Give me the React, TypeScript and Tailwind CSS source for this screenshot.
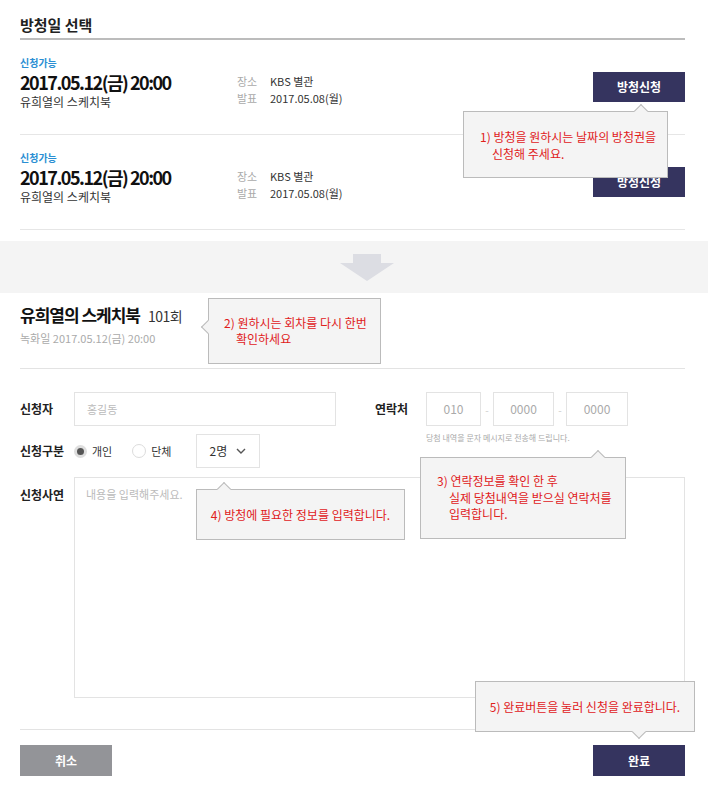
import React from 'react';

const schedules = [
  { status: '신청가능', date: '2017.05.12(금) 20:00', title: '유희열의 스케치북', place: 'KBS 별관', notice: '2017.05.08(월)' },
  { status: '신청가능', date: '2017.05.12(금) 20:00', title: '유희열의 스케치북', place: 'KBS 별관', notice: '2017.05.08(월)' },
];

function ArrowUp({ left }: { left: number }) {
  return (
    <div
      className="absolute top-[-6px] w-[10px] h-[10px] bg-[#f4f4f4] border-l border-t border-[#bbbbbb] rotate-45"
      style={{ left }}
    />
  );
}

export default function App() {
  return (
    <div className="relative w-[708px] min-h-[810px] bg-white text-[#222] font-['Noto_Sans_CJK_KR','Noto_Sans',sans-serif]">
      {/* 방청일 선택 */}
      <div className="ml-[20px] w-[665px]">
        <div className="pt-[15px] pb-[3px] border-b-2 border-[#bcbcbc]">
          <h2 className="text-[15px] leading-[20px] font-bold">방청일 선택</h2>
        </div>

        {schedules.map((item, i) => (
          <div key={i} className="flex items-start h-[95px] border-b border-[#e6e6e6]">
            <div className="w-[217px] pt-[16px]">
              <p className="text-[10px] leading-[14px] font-bold text-[#2b8fd3]">{item.status}</p>
              <p className="text-[18px] leading-[22px] my-[1px] font-bold tracking-[-1.5px] text-[#111]">{item.date}</p>
              <p className="text-[12px] leading-[16px] text-[#333]">{item.title}</p>
            </div>
            <div className="flex-1 pt-[33px] text-[11px] leading-[17px]">
              <div className="flex"><span className="w-[33px] text-[#aaa]">장소</span><span className="text-[#333]">{item.place}</span></div>
              <div className="flex"><span className="w-[33px] text-[#aaa]">발표</span><span className="text-[#333]">{item.notice}</span></div>
            </div>
            <button className="mt-[32px] w-[92px] h-[30px] bg-[#35345f] text-white text-[12px] font-bold">방청신청</button>
          </div>
        ))}
      </div>

      {/* 화살표 */}
      <div className="mt-[11px] h-[52px] bg-[#f4f4f4] flex justify-center pt-[13px]">
        <svg width="54" height="27" viewBox="0 0 54 27" className="ml-[26px]">
          <path d="M13 0 H41 V9 H54 L27 27 L0 9 H13 Z" fill="#dcdde3" />
        </svg>
      </div>

      {/* 회차 정보 */}
      <div className="ml-[20px] w-[665px]">
        <div className="pt-[10px] pb-[22px] border-b border-[#e3e3e3]">
          <p className="leading-[24px]">
            <span className="text-[17px] font-bold text-[#111] tracking-[-1px]">유희열의 스케치북</span>
            <span className="ml-[8px] text-[14px] text-[#333] tracking-[-0.5px]">101회</span>
          </p>
          <p className="mt-[2px] text-[11px] leading-[16px] text-[#aaa]">녹화일 2017.05.12(금) 20:00</p>
        </div>

        {/* 신청 폼 */}
        <div className="pt-[23px] flex">
          <div className="w-[355px]">
            <div className="flex items-center h-[34px]">
              <span className="w-[54px] text-[12px] font-bold">신청자</span>
              <div className="w-[262px] h-[34px] border border-[#e3e3e3] flex items-center pl-[12px] text-[11px] text-[#bbb]">홍길동</div>
            </div>
            <div className="mt-[8px] flex items-center h-[34px]">
              <span className="w-[54px] text-[12px] font-bold">신청구분</span>
              <span className="w-[13px] h-[13px] rounded-full border-[3px] border-[#dedede] bg-[#555]" />
              <span className="ml-[5px] text-[11px] text-[#333]">개인</span>
              <span className="ml-[20px] w-[14px] h-[14px] rounded-full border border-[#dcdcdc]" />
              <span className="ml-[5px] text-[11px] text-[#333]">단체</span>
              <div className="ml-[24px] w-[64px] h-[34px] border border-[#e3e3e3] flex items-center justify-between pl-[13px] pr-[13px]">
                <span className="text-[12px] text-[#333]">2명</span>
                <svg width="10" height="7" viewBox="0 0 10 7"><path d="M1 1 L5 5 L9 1" fill="none" stroke="#555" strokeWidth="1.4" /></svg>
              </div>
            </div>
          </div>
          <div>
            <div className="flex items-center h-[34px]">
              <span className="w-[51px] text-[12px] font-bold">연락처</span>
              <div className="w-[55px] h-[34px] border border-[#e3e3e3] flex items-center justify-center text-[12px] text-[#aaa]">010</div>
              <span className="w-[12px] text-center text-[10px] text-[#ccc]">-</span>
              <div className="w-[61px] h-[34px] border border-[#e3e3e3] flex items-center justify-center text-[12px] text-[#aaa]">0000</div>
              <span className="w-[12px] text-center text-[10px] text-[#ccc]">-</span>
              <div className="w-[62px] h-[34px] border border-[#e3e3e3] flex items-center justify-center text-[12px] text-[#aaa]">0000</div>
            </div>
            <p className="ml-[51px] mt-[6px] text-[8px] leading-[12px] text-[#aaa]">당첨 내역을 문자 메시지로 전송해 드립니다.</p>
          </div>
        </div>

        <div className="mt-[9px] flex items-start">
          <span className="w-[54px] pt-[9px] text-[12px] font-bold">신청사연</span>
          <div className="flex-1 h-[221px] border border-[#e3e3e3] pl-[11px] pt-[8px] text-[11px] text-[#bbb]">내용을 입력해주세요.</div>
        </div>

        <div className="mt-[31px] border-t border-[#e3e3e3] pt-[15px] flex justify-between">
          <button className="w-[92px] h-[31px] bg-[#939498] text-white text-[12px] font-bold">취소</button>
          <button className="w-[92px] h-[31px] bg-[#35345f] text-white text-[12px] font-bold">완료</button>
        </div>
      </div>

      {/* 안내 말풍선 */}
      <div className="absolute left-[463px] top-[111px] w-[205px] h-[67px] bg-[#f4f4f4] border border-[#bbbbbb] flex flex-col justify-center pl-[16px] text-[12px] leading-[17px] text-[#e0201b]">
        <ArrowUp left={172} />
        <p>1) 방청을 원하시는 날짜의 방청권을</p>
        <p className="pl-[12px]">신청해 주세요.</p>
      </div>

      <div className="absolute left-[208px] top-[298px] w-[173px] h-[66px] bg-[#f4f4f4] border border-[#bbbbbb] flex flex-col justify-center pl-[15px] text-[12px] leading-[16px] text-[#e0201b]">
        <div className="absolute left-[-6px] top-[23px] w-[10px] h-[10px] bg-[#f4f4f4] border-l border-b border-[#bbbbbb] rotate-45" />
        <p>2) 원하시는 회차를 다시 한번</p>
        <p className="pl-[12px]">확인하세요</p>
      </div>

      <div className="absolute left-[420px] top-[457px] w-[206px] h-[82px] bg-[#f4f4f4] border border-[#bbbbbb] flex flex-col justify-center pl-[16px] text-[12px] leading-[16.5px] text-[#e0201b]">
        <ArrowUp left={172} />
        <p>3) 연락정보를 확인 한 후</p>
        <p className="pl-[12px]">실제 당첨내역을 받으실 연락처를</p>
        <p className="pl-[12px]">입력합니다.</p>
      </div>

      <div className="absolute left-[196px] top-[489px] w-[209px] h-[51px] bg-[#f4f4f4] border border-[#bbbbbb] flex items-center justify-center text-[12px] text-[#e0201b]">
        <ArrowUp left={22} />
        <p>4) 방청에 필요한 정보를 입력합니다.</p>
      </div>

      <div className="absolute left-[475px] top-[681px] w-[220px] h-[51px] bg-[#f4f4f4] border border-[#bbbbbb] flex items-center justify-center text-[12px] text-[#e0201b]">
        <div className="absolute bottom-[-6px] left-[158px] w-[10px] h-[10px] bg-[#f4f4f4] border-r border-b border-[#bbbbbb] rotate-45" />
        <p>5) 완료버튼을 눌러 신청을 완료합니다.</p>
      </div>
    </div>
  );
}
